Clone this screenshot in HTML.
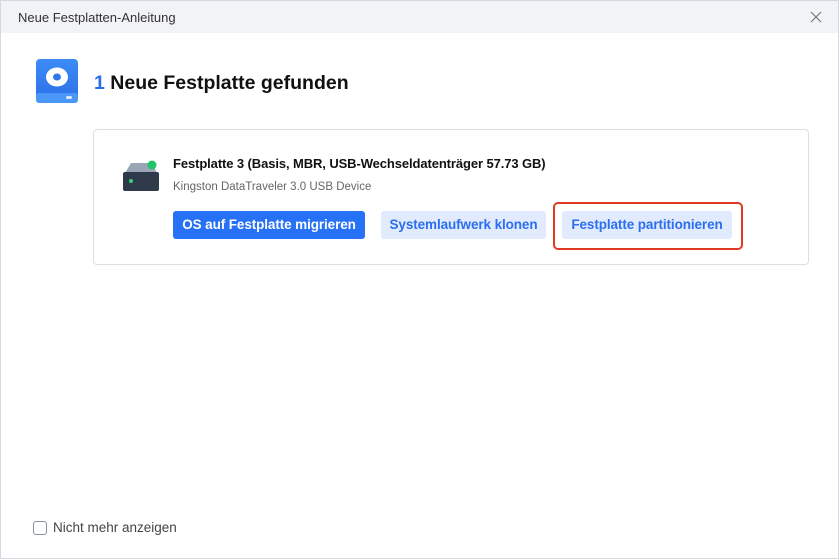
<!DOCTYPE html>
<html><head><meta charset="utf-8"><style>
*{margin:0;padding:0;box-sizing:border-box}
body{width:840px;height:560px;overflow:hidden;background:#fff;font-family:"Liberation Sans",sans-serif;position:relative}
.win{position:absolute;left:0;top:0;width:839px;height:559px;border:1px solid #d4d8e0;background:#fff}
.tb{position:absolute;left:0;top:0;width:100%;height:32px;background:#f2f3f7}
.tb span{position:absolute;left:17px;top:9px;font-size:13px;color:#333}
.abs{position:absolute}
.card{position:absolute;left:92px;top:128px;width:716px;height:136px;border:1px solid #dcdfe6;border-radius:4px}
.btn{position:absolute;top:210px;height:28px;border-radius:3px;font-size:13.5px;line-height:28px;text-align:center;font-weight:600;letter-spacing:-0.1px}
</style></head><body><div class="win">
<div class="tb"><span>Neue Festplatten-Anleitung</span>
<svg class="abs" style="left:809px;top:10px" width="12" height="12" viewBox="0 0 12 12"><path d="M1 1L11 11M11 1L1 11" stroke="#777" stroke-width="1.2"/></svg></div>
<svg class="abs" style="left:35px;top:58px" width="42" height="44" viewBox="0 0 42 44"><defs><linearGradient id="g" x1="0" y1="0" x2="0" y2="1"><stop offset="0" stop-color="#3d8cf5"/><stop offset="1" stop-color="#2a6ee8"/></linearGradient></defs><rect x="0" y="0" width="42" height="44" rx="4" fill="url(#g)"/><rect x="0" y="34" width="42" height="10" rx="3" fill="#4a97f7"/><ellipse cx="21" cy="18" rx="11" ry="9.5" fill="#fff"/><ellipse cx="21" cy="18" rx="4" ry="3.5" fill="#2f78ec"/><rect x="30" y="37" width="6" height="3" rx="1.5" fill="#dbe9ff"/></svg>
<div class="abs" style="left:93px;top:71px;font-size:19.5px;font-weight:bold;color:#111"><span style="color:#2a6ef0">1</span> Neue Festplatte gefunden</div>
<div class="card"></div>
<svg class="abs" style="left:121px;top:159px" width="38" height="31" viewBox="0 0 38 31"><path d="M3 13L9 3H30L35 13Z" fill="#9aa5b5"/><rect x="1" y="12" width="36" height="19" rx="2" fill="#2f3a4b"/><circle cx="9" cy="21" r="2" fill="#35d07a"/><circle cx="30" cy="5" r="4.5" fill="#1fc46b"/></svg>
<div class="abs" style="left:172px;top:155px;font-size:13px;font-weight:bold;color:#111;letter-spacing:-0.1px">Festplatte 3 (Basis, MBR, USB-Wechseldatenträger 57.73 GB)</div>
<div class="abs" style="left:172px;top:180px;font-size:11.5px;color:#666">Kingston DataTraveler 3.0 USB Device</div>
<div class="btn" style="left:172px;width:192px;background:#2671f5;color:#fff">OS auf Festplatte migrieren</div>
<div class="btn" style="left:380px;width:165px;background:#e2ebfd;color:#2b6ef0">Systemlaufwerk klonen</div>
<div class="abs" style="left:552px;top:201px;width:190px;height:48px;border:2px solid #e23a22;border-radius:5px"></div>
<div class="btn" style="left:561px;width:170px;background:#e2ebfd;color:#2b6ef0">Festplatte partitionieren</div>
<div class="abs" style="left:32px;top:520px;width:14px;height:14px;border:1.3px solid #8a90a0;border-radius:3px"></div>
<div class="abs" style="left:52px;top:519px;font-size:13.5px;color:#444">Nicht mehr anzeigen</div>
</div></body></html>
